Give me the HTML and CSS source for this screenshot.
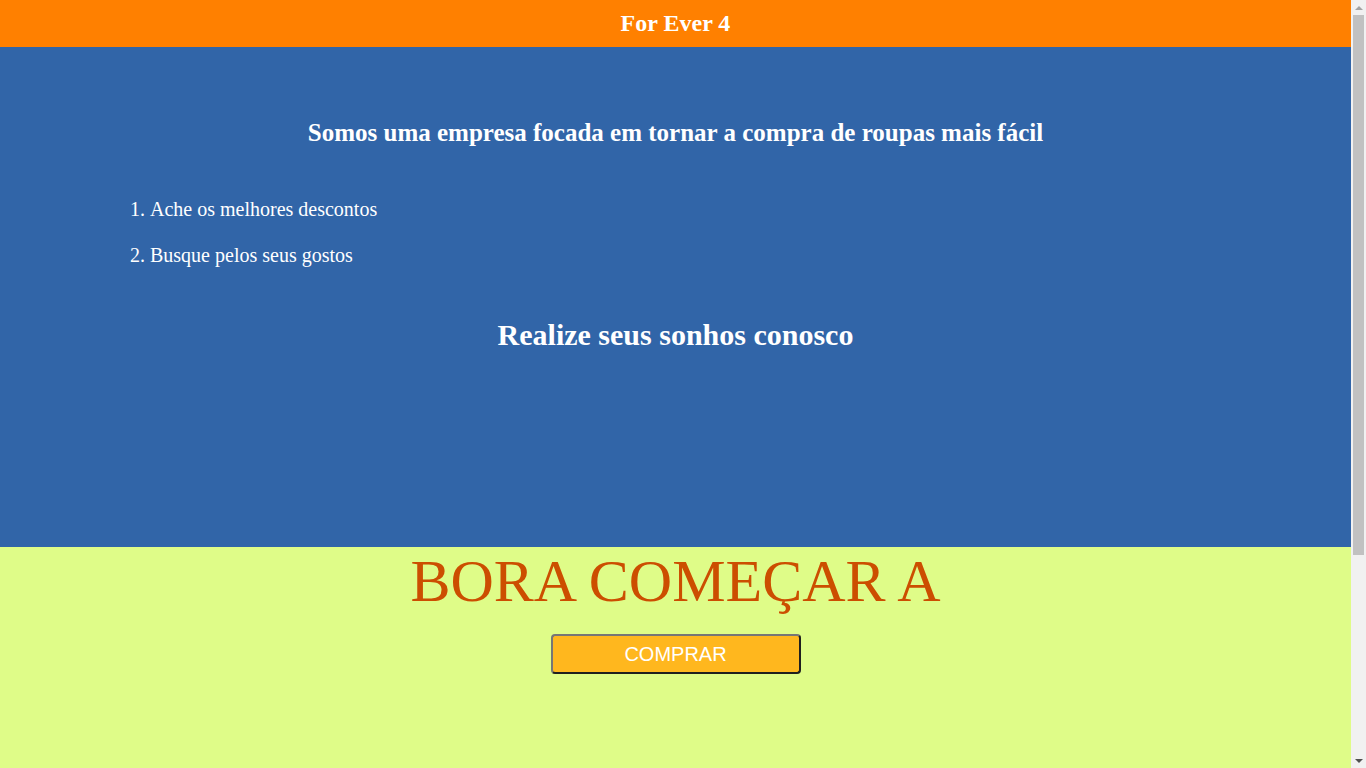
FILE: index.html
```html
<!DOCTYPE html>
<html lang="pt-BR">
<head>
<meta charset="utf-8">
<title>For Ever 4</title>
<link rel="stylesheet" href="styles.css">
</head>
<body>
<div class="page">
  <header class="topbar">
    <h1 class="brand">For Ever 4</h1>
  </header>
  <section class="hero">
    <h2 class="lead">Somos uma empresa focada em tornar a compra de roupas mais fácil</h2>
    <ol class="perks">
      <li>Ache os melhores descontos</li>
      <li>Busque pelos seus gostos</li>
    </ol>
    <h2 class="dream">Realize seus sonhos conosco</h2>
  </section>
  <section class="cta">
    <p class="shout">BORA COMEÇAR A</p>
    <button class="buy" type="button">COMPRAR</button>
  </section>
</div>
<aside class="scrollbar" aria-hidden="true">
  <div class="sb-btn"><span class="arrow-up"></span></div>
  <div class="sb-track"><div class="sb-thumb"></div></div>
  <div class="sb-btn"><span class="arrow-down"></span></div>
</aside>
</body>
</html>
```
FILE: styles.css
```css
html, body {
  margin: 0;
  padding: 0;
}
body {
  font-family: "Liberation Serif", "Times New Roman", serif;
  color: #fff;
  display: flex;
  align-items: flex-start;
}
.page {
  flex: 1;
  min-width: 0;
}
.topbar {
  background: #ff8000;
  height: 47px;
  box-sizing: border-box;
  padding-bottom: 1px;
  display: flex;
  align-items: center;
  justify-content: center;
}
.brand {
  margin: 0;
  font-size: 24px;
  font-weight: bold;
  line-height: 28px;
}
.hero {
  background: #3165a8;
  height: 500px;
  box-sizing: border-box;
  padding-top: 72px;
  display: flex;
  flex-direction: column;
}
.lead {
  margin: 0;
  text-align: center;
  font-size: 25px;
  line-height: 28px;
}
.perks {
  margin: 51px 0 0 0;
  padding-left: 150px;
  font-size: 20px;
  line-height: 23px;
}
.perks li + li {
  margin-top: 23px;
}
.dream {
  margin: 51px 0 0 0;
  text-align: center;
  font-size: 30px;
  line-height: 34px;
}
.cta {
  background: #dffc88;
  height: 520px;
  display: flex;
  flex-direction: column;
  align-items: center;
}
.shout {
  margin: 0;
  color: #cc4e00;
  font-size: 60px;
  line-height: 69px;
}
.buy {
  margin-top: 18px;
  width: 250px;
  height: 40px;
  background: #ffb71e;
  color: #fff;
  font-family: "Liberation Sans", Arial, sans-serif;
  font-size: 20px;
  border: 2px solid;
  border-color: #767676 #1f1f1f #1f1f1f #767676;
  border-radius: 4px;
  padding: 0;
}
.scrollbar {
  position: sticky;
  top: 0;
  width: 15px;
  height: 100vh;
  flex: none;
  background: #f1f1f1;
  display: flex;
  flex-direction: column;
}
.sb-btn {
  height: 15px;
  display: flex;
  align-items: center;
  justify-content: center;
}
.arrow-up {
  width: 0;
  height: 0;
  border-left: 4px solid transparent;
  border-right: 4px solid transparent;
  border-bottom: 4px solid #a3a3a3;
}
.arrow-down {
  width: 0;
  height: 0;
  border-left: 4px solid transparent;
  border-right: 4px solid transparent;
  border-top: 4px solid #505050;
}
.sb-track {
  flex: 1;
  padding: 0 2px;
}
.sb-thumb {
  height: 540px;
  background: #c1c1c1;
}
```
